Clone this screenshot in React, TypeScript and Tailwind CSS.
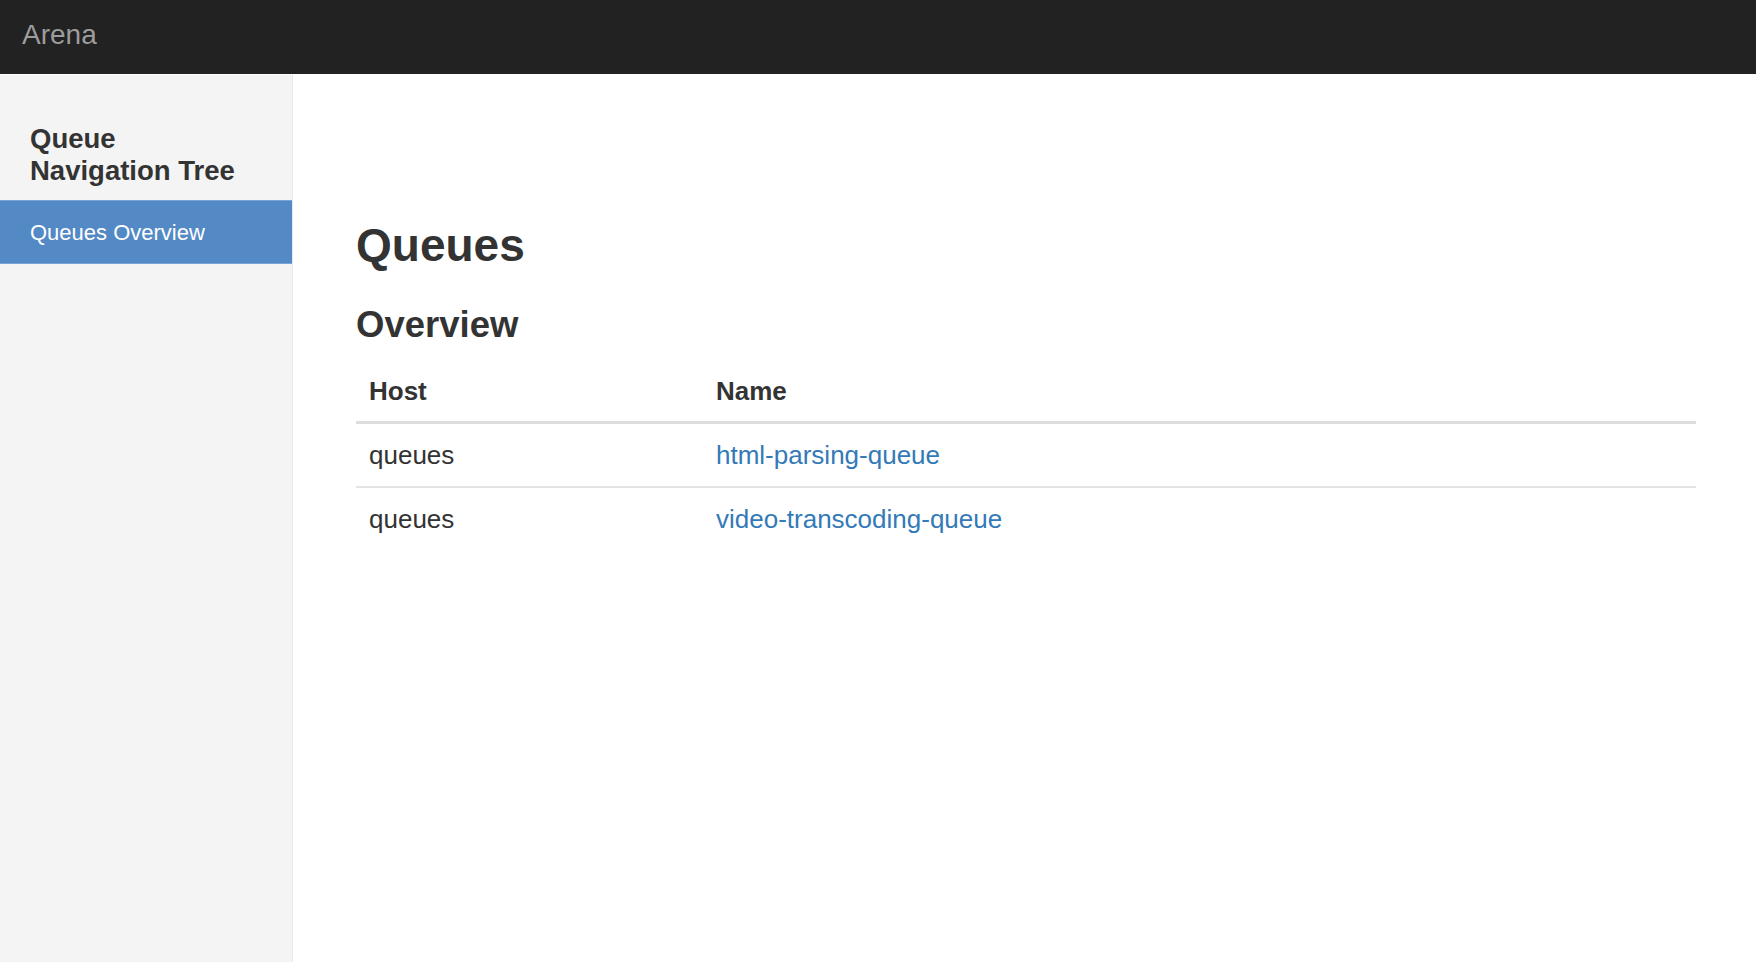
const queues = [
  { host: "queues", name: "html-parsing-queue" },
  { host: "queues", name: "video-transcoding-queue" },
];

export default function App() {
  return (
    <div className="flex min-h-screen flex-col bg-white font-['Liberation_Sans',Arial,sans-serif] text-[#333]">
      {/* Navbar */}
      <header className="flex h-[74px] shrink-0 items-center bg-[#222] px-[22px] pb-[4px]">
        <span className="text-[28px] leading-none text-[#9d9d9d]">Arena</span>
      </header>

      <div className="flex flex-1">
        {/* Sidebar */}
        <aside className="w-[293px] shrink-0 border-t border-r border-t-white border-r-[#e9e9e9] bg-[#f4f4f4] pt-[48px]">
          <h3 className="px-[30px] text-[27.5px] font-bold leading-[32px]">
            Queue
            <br />
            Navigation Tree
          </h3>
          <a
            href="#"
            className="mt-[13px] flex h-[64px] items-center border-y border-[#7aa3d3] bg-[#5389c5] px-[30px] text-[22px] text-white"
          >
            Queues Overview
          </a>
        </aside>

        {/* Main */}
        <main className="flex-1 pt-[146px] pr-[60px] pl-[63px]">
          <h1 className="text-[46px] font-bold leading-[50px]">Queues</h1>
          <h2 className="mt-[35px] text-[36.5px] font-bold leading-[40px]">Overview</h2>

          <table className="mt-[16px] w-full border-collapse text-left text-[26px] leading-[36px]">
            <thead>
              <tr className="border-b-[3px] border-[#ddd]">
                <th className="w-[347px] px-[13px] py-[12px] font-bold">Host</th>
                <th className="px-[13px] py-[12px] font-bold">Name</th>
              </tr>
            </thead>
            <tbody>
              {queues.map((q) => (
                <tr key={q.name} className="border-b-2 border-[#e3e3e3] last:border-b-0">
                  <td className="px-[13px] py-[13px]">{q.host}</td>
                  <td className="px-[13px] py-[13px]">
                    <a href="#" className="text-[#337ab7]">
                      {q.name}
                    </a>
                  </td>
                </tr>
              ))}
            </tbody>
          </table>
        </main>
      </div>
    </div>
  );
}
